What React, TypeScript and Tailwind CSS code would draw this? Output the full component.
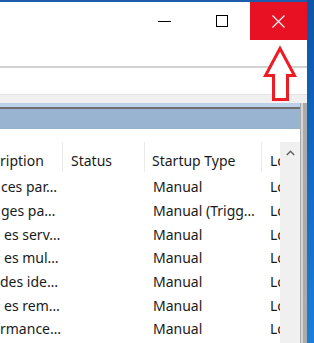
import React from "react";

const rows = [
  { d: "ces par…", pl: "pl-[1px]", s: "Manual" },
  { d: "ges pa…", pl: "pl-[1px]", s: "Manual (Trigg…" },
  { d: "es serv…", pl: "pl-[4px]", s: "Manual" },
  { d: "es mul…", pl: "pl-[4px]", s: "Manual" },
  { d: "des ide…", pl: "pl-0", s: "Manual" },
  { d: "es rem…", pl: "pl-[4px]", s: "Manual" },
  { d: "rmance…", pl: "pl-0", s: "Manual" },
];

export default function App() {
  return (
    <div
      className="relative flex w-[314px] h-[343px] overflow-hidden text-[14px] text-[#1a1a1a]"
      style={{ fontFamily: '"Noto Sans", "Open Sans", sans-serif' }}
    >
      {/* window */}
      <div className="flex flex-col w-[307px] h-full bg-white">
        <div className="h-[2px] bg-[#1d5caa]" />
        {/* title bar */}
        <div className="flex h-[38px] justify-end bg-white">
          <div className="flex w-[57px] items-center justify-center">
            <div className="w-[13px] h-px bg-black" />
          </div>
          <div className="flex w-[57px] items-center justify-center">
            <div className="w-[12px] h-[12px] border border-black" />
          </div>
          <div className="flex w-[57px] items-center justify-center bg-[#e81123]">
            <svg width="13" height="13" viewBox="0 0 13 13">
              <path d="M0.5 0.5 L12.5 12.5 M12.5 0.5 L0.5 12.5" stroke="#fff" strokeWidth="1.1" />
            </svg>
          </div>
        </div>
        <div className="h-[28px] bg-white border-b-2 border-[#d2d2d2]" />
        <div className="h-[27px] bg-white border-b border-[#e3e3e3]" />
        <div className="h-[8px] bg-[#f0f0f0]" />
        {/* inner pane */}
        <div className="flex flex-1 min-h-0">
          <div className="flex flex-col w-[300px]">
            <div className="h-[4px] bg-[#bdd2ea]" />
            <div className="h-[2px] bg-[#6f6f6f]" />
            <div className="h-[20px] bg-[#99b4d1]" />
            <div className="h-[13px] bg-white" />
            <div className="flex flex-1 min-h-0">
              <div className="flex flex-col w-[280px] overflow-hidden bg-white">
                {/* header */}
                <div className="flex h-[30px] items-center whitespace-nowrap">
                  <div className="w-[63px] h-full flex items-center pt-[7px] border-r border-[#ebebeb] overflow-hidden">
                    <span>ription</span>
                  </div>
                  <div className="w-[82px] h-full flex items-center pt-[7px] pl-[8px] border-r border-[#ebebeb]">
                    <span>Status</span>
                  </div>
                  <div className="w-[117px] h-full flex items-center pt-[7px] pl-[7px] border-r border-[#ebebeb]">
                    <span>Startup Type</span>
                  </div>
                  <div className="w-[18px] h-full flex items-center pt-[7px] pl-[8px] overflow-hidden">
                    <span>Log On As</span>
                  </div>
                </div>
                {rows.map((r, i) => (
                  <div key={i} className="flex h-[23.67px] items-center pt-[6px] whitespace-nowrap">
                    <div className={`w-[63px] overflow-hidden ${r.pl}`}>{r.d}</div>
                    <div className="w-[82px]" />
                    <div className="w-[117px] pl-[8px] overflow-hidden">{r.s}</div>
                    <div className="w-[18px] pl-[8px] overflow-hidden">Local System</div>
                  </div>
                ))}
              </div>
              {/* scrollbar */}
              <div className="w-[20px] bg-[#f0f0f0] flex justify-center pt-[8px]">
                <svg width="9" height="6" viewBox="0 0 9 6">
                  <path d="M0.8 5 L4.5 1.2 L8.2 5" stroke="#606060" strokeWidth="1.4" fill="none" />
                </svg>
              </div>
            </div>
          </div>
          <div className="w-[3px] bg-[#d6d6d6] border-l border-[#a8a8a8]" />
          <div className="w-[4px] bg-[#ababab]" />
        </div>
      </div>
      {/* desktop strip */}
      <div className="w-[7px] h-full bg-gradient-to-b from-[#0b54aa] to-[#1b7fda]" />

      {/* annotation arrow */}
      <svg
        className="absolute left-[262px] top-[45px]"
        width="36"
        height="58"
        viewBox="0 0 36 58"
      >
        <path
          d="M18 3.5 L32.5 30.5 L25.5 30.5 L25.5 54.5 L11.5 54.5 L11.5 30.5 L3.5 30.5 Z"
          fill="#fff"
          stroke="#ed1c24"
          strokeWidth="3"
          strokeLinejoin="miter"
        />
      </svg>
    </div>
  );
}
